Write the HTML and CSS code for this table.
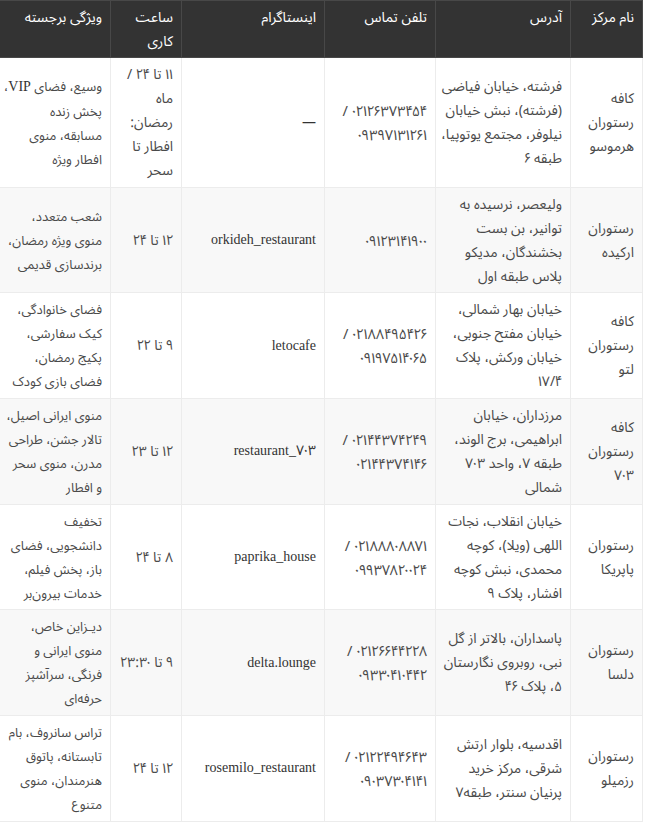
FILE: index.html
```html
<!DOCTYPE html>
<html lang="fa" dir="rtl">
<head>
<meta charset="utf-8">
<title>رستوران‌ها</title>
<link rel="stylesheet" href="styles.css">
</head>
<body>
<div class="wrap">
<table class="centers">
<colgroup>
<col class="c-name"><col class="c-addr"><col class="c-tel"><col class="c-insta"><col class="c-hours"><col class="c-feat">
</colgroup>
<thead>
<tr>
<th>نام مرکز</th>
<th>آدرس</th>
<th>تلفن تماس</th>
<th>اینستاگرام</th>
<th>ساعت<br>کاری</th>
<th>ویژگی برجسته</th>
</tr>
</thead>
<tbody>
<tr>
<td>کافه<br>رستوران<br>هرموسو</td>
<td>فرشته، خیابان فیاضی<br>(فرشته)، نبش خیابان<br>نیلوفر، مجتمع یوتوپیا،<br>طبقه ۶</td>
<td class="tel">۰۲۱۲۶۳۷۳۴۵۴ /<br>۰۹۳۹۷۱۳۱۲۶۱</td>
<td class="insta">—</td>
<td>۱۱ تا ۲۴ /<br>ماه<br>رمضان:<br>افطار تا<br>سحر</td>
<td class="feat">وسیع، فضای <span class="lat">VIP</span>،<br>پخش زنده<br>مسابقه، منوی<br>افطار ویژه</td>
</tr>
<tr>
<td>رستوران<br>ارکیده</td>
<td>ولیعصر، نرسیده به<br>توانیر، بن بست<br>بخشندگان، مدیکو<br>پلاس طبقه اول</td>
<td class="tel">۰۹۱۲۳۱۴۱۹۰۰</td>
<td class="insta"><span class="lat">orkideh_restaurant</span></td>
<td>۱۲ تا ۲۴</td>
<td class="feat">شعب متعدد،<br>منوی ویژه رمضان،<br>برندسازی قدیمی</td>
</tr>
<tr>
<td>کافه<br>رستوران<br>لتو</td>
<td>خیابان بهار شمالی،<br>خیابان مفتح جنوبی،<br>خیابان ورکش، پلاک<br>۱۷/۴</td>
<td class="tel">۰۲۱۸۸۴۹۵۴۲۶ /<br>۰۹۱۹۷۵۱۴۰۶۵</td>
<td class="insta"><span class="lat">letocafe</span></td>
<td>۹ تا ۲۲</td>
<td class="feat">فضای خانوادگی،<br>کیک سفارشی،<br>پکیج رمضان،<br>فضای بازی کودک</td>
</tr>
<tr>
<td>کافه<br>رستوران<br>۷۰۳</td>
<td>مرزداران، خیابان<br>ابراهیمی، برج الوند،<br>طبقه ۷، واحد ۷۰۳<br>شمالی</td>
<td class="tel">۰۲۱۴۴۳۷۴۲۴۹ /<br>۰۲۱۴۴۳۷۴۱۴۶</td>
<td class="insta"><span class="lat">restaurant_</span><span class="num">۷۰۳</span></td>
<td>۱۲ تا ۲۳</td>
<td class="feat">منوی ایرانی اصیل،<br>تالار جشن، طراحی<br>مدرن، منوی سحر<br>و افطار</td>
</tr>
<tr>
<td>رستوران<br>پاپریکا</td>
<td>خیابان انقلاب، نجات<br>اللهی (ویلا)، کوچه<br>محمدی، نبش کوچه<br>افشار، پلاک ۹</td>
<td class="tel">۰۲۱۸۸۸۰۸۸۷۱ /<br>۰۹۹۳۷۸۲۰۰۲۴</td>
<td class="insta"><span class="lat">paprika_house</span></td>
<td>۸ تا ۲۴</td>
<td class="feat">تخفیف<br>دانشجویی، فضای<br>باز، پخش فیلم،<br>خدمات بیرون‌بر</td>
</tr>
<tr>
<td>رستوران<br>دلسا</td>
<td>پاسداران، بالاتر از گل<br>نبی، روبروی نگارستان<br>۵، پلاک ۴۶</td>
<td class="tel">۰۲۱۲۶۶۴۴۲۲۸ /<br>۰۹۳۳۰۴۱۰۴۴۲</td>
<td class="insta"><span class="lat">delta.lounge</span></td>
<td>۹ تا ۲۳:۳۰</td>
<td class="feat">دیـزاین خاص،<br>منوی ایرانی و<br>فرنگی، سرآشپز<br>حرفه‌ای</td>
</tr>
<tr>
<td>رستوران<br>رزمیلو</td>
<td>اقدسیه، بلوار ارتش<br>شرقی، مرکز خرید<br>پرنیان سنتر، طبقه۷</td>
<td class="tel">۰۲۱۲۲۴۹۴۶۴۳ /<br>۰۹۰۳۷۳۰۴۱۴۱</td>
<td class="insta"><span class="lat">rosemilo_restaurant</span></td>
<td>۱۲ تا ۲۴</td>
<td class="feat">تراس سانروف، بام<br>تابستانه، پاتوق<br>هنرمندان، منوی<br>متنوع</td>
</tr>
</tbody>
</table>
</div>
</body>
</html>
```
FILE: styles.css
```css
html, body {
  margin: 0;
  padding: 0;
  background: #ffffff;
}
body {
  font-family: "Noto Sans Arabic UI", "Noto Sans Arabic", "Noto Naskh Arabic", "DejaVu Sans", sans-serif;
  font-size: 14px;
  color: #4a4a4a;
}
.wrap {
  width: 643px;
  margin-right: 2px;
}
.centers {
  width: 643px;
  border-collapse: collapse;
  table-layout: fixed;
}
.c-name { width: 72px; }
.c-addr { width: 135px; }
.c-tel { width: 111px; }
.c-insta { width: 143px; }
.c-hours { width: 71px; }
.c-feat { width: 111px; }
th, td {
  border: 1px solid #ececec;
  padding: 4px 8px;
  line-height: 24px;
  text-align: right;
  white-space: nowrap;
}
th {
  background: #333333;
  color: #ffffff;
  font-weight: normal;
  vertical-align: top;
  border-color: #484848;
}
td {
  vertical-align: middle;
}
tbody td {
  padding-bottom: 4.67px;
}
tbody tr:nth-child(even) td {
  background: #f8f8f8;
}
.feat {
  font-size: 13px;
}
.tel {
  font-size: 14.5px;
}
.insta {
  color: #333333;
}
.lat {
  font-family: "Liberation Serif", "DejaVu Serif", serif;
  font-size: 14px;
  color: #333333;
}
.num {
  font-size: 14px;
}
```
